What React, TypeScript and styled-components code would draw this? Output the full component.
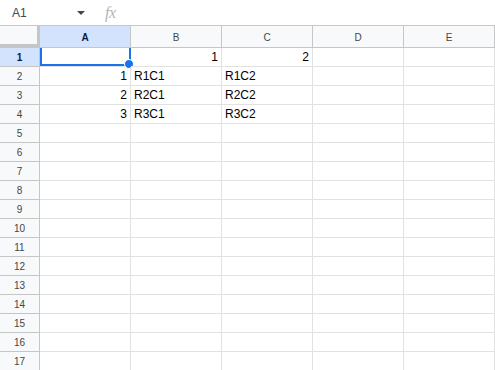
import React from 'react';
import styled, { createGlobalStyle } from 'styled-components';

const GlobalStyle = createGlobalStyle`
  body {
    margin: 0;
    background: #ffffff;
    font-family: "Liberation Sans", Arial, sans-serif;
  }
`;

const Page = styled.div`
  width: 495px;
  height: 370px;
  overflow: hidden;
  background: #fff;
`;

const FormulaBar = styled.div`
  display: flex;
  align-items: center;
  height: 26px;
  border-bottom: 1px solid #c7c7c7;
  box-sizing: border-box;
`;

const NameBox = styled.div`
  display: flex;
  align-items: center;
  justify-content: space-between;
  width: 85px;
  padding-left: 12px;
  box-sizing: border-box;
  font-size: 12px;
  color: #444746;
`;

const Caret = styled.span`
  width: 0;
  height: 0;
  border-left: 4px solid transparent;
  border-right: 4px solid transparent;
  border-top: 4px solid #444746;
`;

const Fx = styled.span`
  margin-left: 20px;
  font-family: "Liberation Serif", serif;
  font-style: italic;
  font-size: 16px;
  color: #b5b5b5;
  letter-spacing: -0.5px;
`;

const Grid = styled.div`
  display: grid;
  grid-template-columns: 40px repeat(5, 91px);
  grid-template-rows: 22px;
  grid-auto-rows: 19px;
`;

const Corner = styled.div`
  background: #f8f9fa;
  border-right: 3px solid #c4c7c5;
  border-bottom: 4px solid #c4c7c5;
  box-sizing: border-box;
`;

const ColHeader = styled.div<{ $active?: boolean }>`
  display: flex;
  align-items: center;
  justify-content: center;
  box-sizing: border-box;
  border-right: 1px solid #c4c7c5;
  border-bottom: 1px solid #c4c7c5;
  background: ${(p) => (p.$active ? '#d3e3fd' : '#f8f9fa')};
  color: ${(p) => (p.$active ? '#041e49' : '#444746')};
  font-weight: ${(p) => (p.$active ? 700 : 400)};
  font-size: 10px;
  padding-top: 1px;
`;

const RowHeader = styled.div<{ $active?: boolean }>`
  display: flex;
  align-items: center;
  justify-content: center;
  box-sizing: border-box;
  border-right: 1px solid #c4c7c5;
  border-bottom: 1px solid #c4c7c5;
  background: ${(p) => (p.$active ? '#d3e3fd' : '#f8f9fa')};
  color: ${(p) => (p.$active ? '#041e49' : '#444746')};
  font-weight: ${(p) => (p.$active ? 700 : 400)};
  font-size: 10px;
`;

const Cell = styled.div<{ $num?: boolean }>`
  position: relative;
  display: flex;
  align-items: flex-end;
  justify-content: ${(p) => (p.$num ? 'flex-end' : 'flex-start')};
  box-sizing: border-box;
  border-right: 1px solid #e2e2e2;
  border-bottom: 1px solid #e2e2e2;
  padding: 0 3px 2px 3px;
  font-size: 12px;
  line-height: 14px;
  color: #000;
  white-space: nowrap;
`;

const Selection = styled.div`
  position: absolute;
  left: 0;
  top: 0;
  right: -1px;
  bottom: 0;
  border: 2px solid #1a73e8;
  border-top: none;
  pointer-events: none;
`;

const Handle = styled.div`
  position: absolute;
  right: -5px;
  bottom: -5px;
  width: 8px;
  height: 8px;
  border-radius: 50%;
  background: #1a73e8;
  border: 1px solid #fff;
`;

const columns = ['A', 'B', 'C', 'D', 'E'];

const data: string[][] = [
  ['', '1', '2', '', ''],
  ['1', 'R1C1', 'R1C2', '', ''],
  ['2', 'R2C1', 'R2C2', '', ''],
  ['3', 'R3C1', 'R3C2', '', ''],
];

const ROWS = 17;

const isNum = (v: string) => v !== '' && !isNaN(Number(v));

export default function App() {
  return (
    <Page>
      <GlobalStyle />
      <FormulaBar>
        <NameBox>
          A1
          <Caret />
        </NameBox>
        <Fx>fx</Fx>
      </FormulaBar>
      <Grid>
        <Corner />
        {columns.map((c, i) => (
          <ColHeader key={c} $active={i === 0}>
            {c}
          </ColHeader>
        ))}
        {Array.from({ length: ROWS }, (_, r) => (
          <React.Fragment key={r}>
            <RowHeader $active={r === 0}>{r + 1}</RowHeader>
            {columns.map((c, ci) => {
              const v = data[r]?.[ci] ?? '';
              return (
                <Cell key={c} $num={isNum(v)}>
                  {v}
                  {r === 0 && ci === 0 && (
                    <Selection>
                      <Handle />
                    </Selection>
                  )}
                </Cell>
              );
            })}
          </React.Fragment>
        ))}
      </Grid>
    </Page>
  );
}
